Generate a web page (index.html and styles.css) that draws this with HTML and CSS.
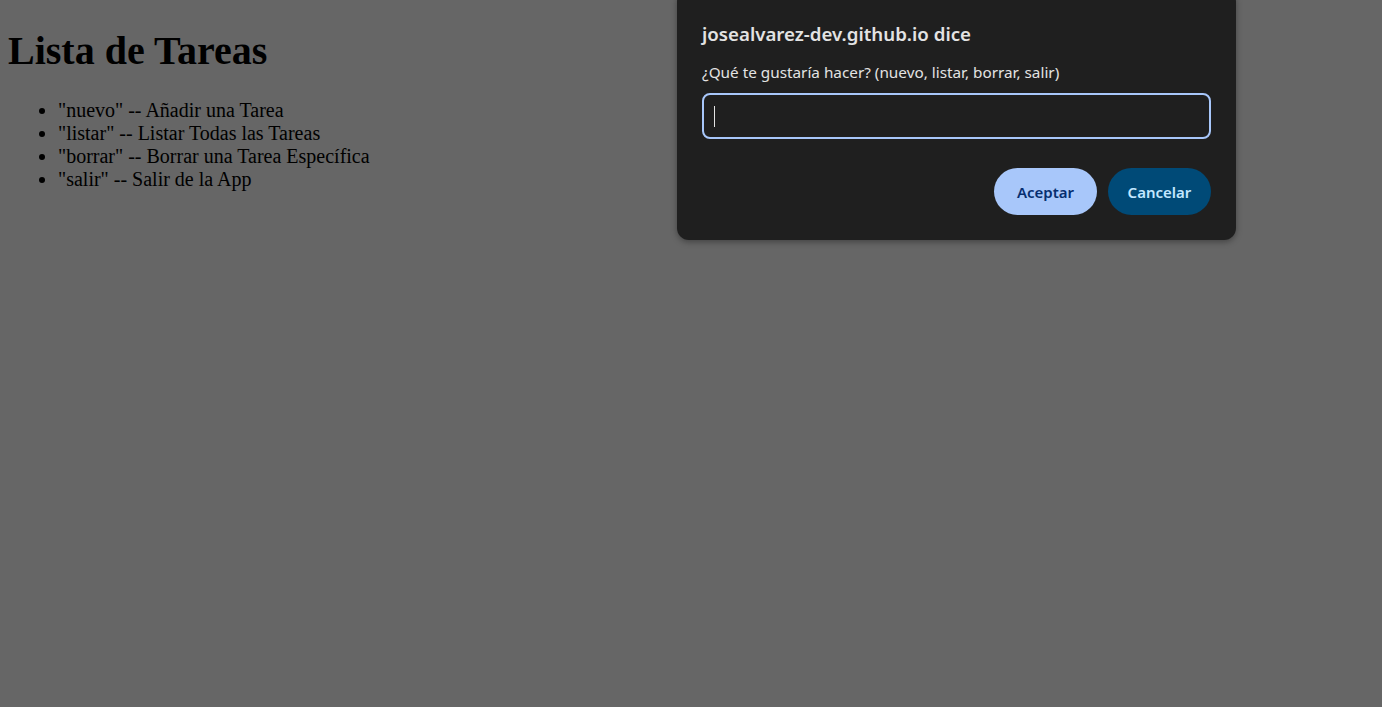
FILE: index.html
```html
<!DOCTYPE html>
<html lang="es">
<head>
<meta charset="utf-8">
<title>Lista de Tareas</title>
<link rel="stylesheet" href="styles.css">
</head>
<body>
<h1 class="title">Lista de Tareas</h1>
<ul class="menu">
  <li>"nuevo" -- Añadir una Tarea</li>
  <li>"listar" -- Listar Todas las Tareas</li>
  <li>"borrar" -- Borrar una Tarea Específica</li>
  <li>"salir" -- Salir de la App</li>
</ul>

<div class="dialog" role="dialog">
  <div class="dialog-title">josealvarez-dev.github.io dice</div>
  <div class="dialog-msg">¿Qué te gustaría hacer? (nuevo, listar, borrar, salir)</div>
  <div class="dialog-input"><span class="caret"></span></div>
  <div class="dialog-actions">
    <button class="btn btn-ok">Aceptar</button>
    <button class="btn btn-cancel">Cancelar</button>
  </div>
</div>
</body>
</html>
```

FILE: styles.css
```css
html, body {
  height: 100%;
}
body {
  margin: 0 8px;
  background: #666666;
  color: #000;
  font-family: "Liberation Serif", "Times New Roman", serif;
  font-size: 20px;
  overflow: hidden;
}
.title {
  font-size: 40px;
  font-weight: bold;
  margin: 26.8px 0 25.6px 0;
}
.menu {
  margin: 20px 0;
  padding-left: 50px;
}

.dialog {
  position: absolute;
  left: 677px;
  top: -10px;
  width: 559px;
  box-sizing: border-box;
  padding: 24px 25px 25px 25px;
  background: #1f1f1f;
  border-radius: 12px;
  box-shadow: 0 2px 6px rgba(0,0,0,0.35);
  font-family: "Noto Sans", "Open Sans", sans-serif;
  color: #e3e3e3;
}
.dialog-title {
  font-size: 18.7px;
  font-weight: 600;
  line-height: 24px;
  margin-top: 8px;
}
.dialog-msg {
  font-size: 15.3px;
  line-height: 20px;
  margin-top: 16px;
}
.dialog-input {
  margin-top: 11px;
  height: 46px;
  box-sizing: border-box;
  border: 2px solid #a8c7fa;
  border-radius: 8px;
  display: flex;
  align-items: center;
  padding-left: 10px;
}
.caret {
  width: 1px;
  height: 21px;
  background: #e3e3e3;
}
.dialog-actions {
  display: flex;
  justify-content: flex-end;
  gap: 11px;
  margin-top: 29px;
}
.btn {
  width: 103px;
  height: 47px;
  border: none;
  border-radius: 24px;
  font-family: "Noto Sans", "Open Sans", sans-serif;
  font-size: 15px;
  font-weight: 600;
  padding: 0;
}
.btn-ok {
  background: #a8c7fa;
  color: #062e6f;
}
.btn-cancel {
  background: #004a77;
  color: #c2e7ff;
}
```
